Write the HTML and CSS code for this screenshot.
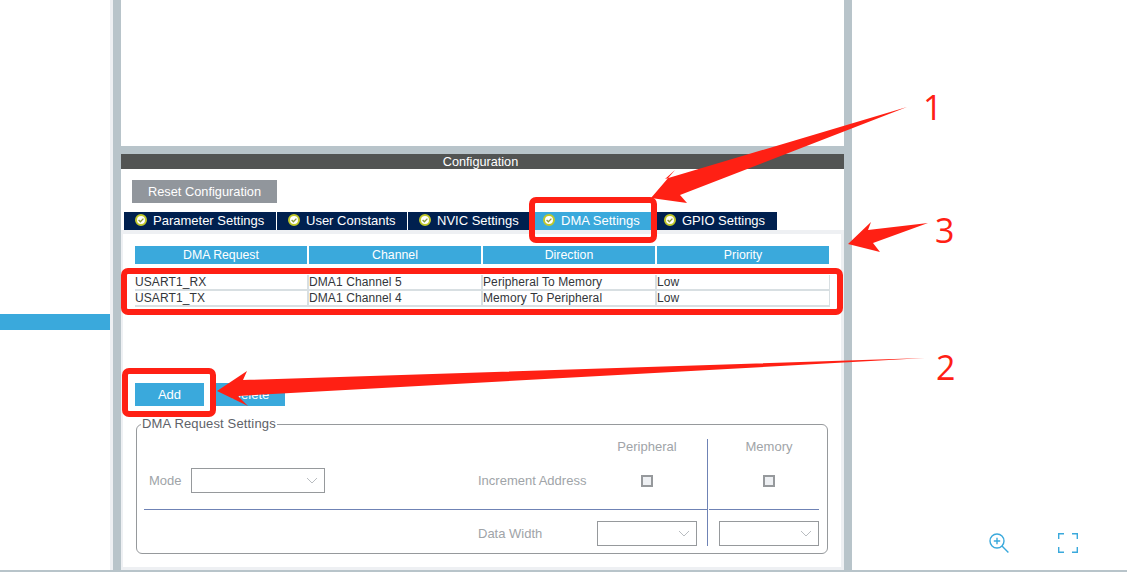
FILE: index.html
```html
<!DOCTYPE html>
<html lang="en">

<head>
    <meta charset="UTF-8">
    <title>DMA Settings</title>
    <link rel="stylesheet" href="styles.css">
</head>

<body>
    <div class="page">
        <div class="left-pane">
            <div class="left-item"></div>
        </div>

        <div class="main-pane">
            <div class="top-area"></div>

            <div class="config">
                <div class="config-title">Configuration</div>
                <button class="reset-btn">Reset Configuration</button>

                <div class="tabs">
                    <div class="tab"><svg class="tab-icon" viewBox="0 0 12 12"><circle cx="6" cy="6" r="5" fill="#fff" stroke="#c0c82a" stroke-width="2"/><path d="M3.6 6l1.8 1.8 3-3.2" fill="none" stroke="#8c9a3c" stroke-width="1.3"/></svg>Parameter Settings</div>
                    <div class="tab tab-user"><svg class="tab-icon" viewBox="0 0 12 12"><circle cx="6" cy="6" r="5" fill="#fff" stroke="#c0c82a" stroke-width="2"/><path d="M3.6 6l1.8 1.8 3-3.2" fill="none" stroke="#8c9a3c" stroke-width="1.3"/></svg>User Constants</div>
                    <div class="tab tab-nvic"><svg class="tab-icon" viewBox="0 0 12 12"><circle cx="6" cy="6" r="5" fill="#fff" stroke="#c0c82a" stroke-width="2"/><path d="M3.6 6l1.8 1.8 3-3.2" fill="none" stroke="#8c9a3c" stroke-width="1.3"/></svg>NVIC Settings</div>
                    <div class="tab tab-dma active"><svg class="tab-icon" viewBox="0 0 12 12"><circle cx="6" cy="6" r="5" fill="#fff" stroke="#c0c82a" stroke-width="2"/><path d="M3.6 6l1.8 1.8 3-3.2" fill="none" stroke="#8c9a3c" stroke-width="1.3"/></svg>DMA Settings</div>
                    <div class="tab tab-gpio"><svg class="tab-icon" viewBox="0 0 12 12"><circle cx="6" cy="6" r="5" fill="#fff" stroke="#c0c82a" stroke-width="2"/><path d="M3.6 6l1.8 1.8 3-3.2" fill="none" stroke="#8c9a3c" stroke-width="1.3"/></svg>GPIO Settings</div>
                </div>

                <div class="panel">
                    <div class="dma-head">
                        <div>DMA Request</div>
                        <div>Channel</div>
                        <div>Direction</div>
                        <div>Priority</div>
                    </div>

                    <div class="dma-rows">
                        <div class="dma-row">
                            <div>USART1_RX</div>
                            <div>DMA1 Channel 5</div>
                            <div>Peripheral To Memory</div>
                            <div>Low</div>
                        </div>
                        <div class="dma-row">
                            <div>USART1_TX</div>
                            <div>DMA1 Channel 4</div>
                            <div>Memory To Peripheral</div>
                            <div>Low</div>
                        </div>
                    </div>

                    <div class="actions">
                        <button class="action-btn">Add</button>
                        <button class="action-btn">Delete</button>
                    </div>

                    <fieldset class="request-box">
                        <legend>DMA Request Settings</legend>
                        <div class="request-grid">
                            <div class="col-title col-periph">Peripheral</div>
                            <div class="col-title col-mem">Memory</div>

                            <div class="mode-cell">
                                <span class="mode-label">Mode</span>
                                <div class="drop drop-mode"><svg viewBox="0 0 12 7"><path d="M1 1l5 5 5-5" fill="none" stroke="#b9bdc1"/></svg></div>
                            </div>
                            <div class="field-label row-inc">Increment Address</div>
                            <div class="check-cell col-periph row-inc"><span class="check"></span></div>
                            <div class="check-cell col-mem row-inc"><span class="check"></span></div>

                            <div class="h-line"></div>
                            <div class="v-line"></div>

                            <div class="field-label row-width">Data Width</div>
                            <div class="drop col-periph row-width"><svg viewBox="0 0 12 7"><path d="M1 1l5 5 5-5" fill="none" stroke="#b9bdc1"/></svg></div>
                            <div class="drop col-mem row-width"><svg viewBox="0 0 12 7"><path d="M1 1l5 5 5-5" fill="none" stroke="#b9bdc1"/></svg></div>
                        </div>
                    </fieldset>
                </div>
            </div>
        </div>

        <div class="right-pane">
            <div class="view-tools">
                <svg class="view-icon" viewBox="0 0 20 20" fill="none" stroke="#3aa9dc" stroke-width="1.4">
                    <circle cx="8" cy="8" r="7"/>
                    <path d="M13 13l6.4 6.4M8 4.8v6.4M4.8 8h6.4"/>
                </svg>
                <svg class="view-icon" viewBox="0 0 20 20" fill="none" stroke="#3aa9dc" stroke-width="1.4">
                    <path d="M.7 6V.7H6M14 .7h5.3V6M19.3 14v5.3H14M6 19.3H.7V14"/>
                </svg>
            </div>
        </div>
    </div>

    <!-- red markup drawn on top of the screenshot -->
    <svg class="markup" viewBox="0 0 1127 572">
        <g fill="none" stroke="#ff2014" stroke-width="6">
            <rect x="532" y="200" width="122" height="40" rx="4"/>
            <rect x="124" y="271" width="716" height="41" rx="4"/>
            <rect x="125" y="371" width="88" height="43" rx="4"/>
        </g>
        <g fill="#ff2014">
            <polygon points="907,107 665,179 675,170 651,198 687,203 680,195"/>
            <polygon points="925,358 243,380 247,371 217,391 248,406 238,396"/>
            <polygon points="928,223 868,230 871,222 848,244 880,252 873,243"/>
        </g>
        <g class="markup-num">
            <text x="923" y="120">1</text>
            <text x="936" y="380">2</text>
            <text x="935" y="243">3</text>
        </g>
    </svg>
</body>

</html>
```

FILE: styles.css
```css
html,
body {
    margin: 0;
    height: 100%;
    overflow: hidden;
    background: #fff;
}

body {
    position: relative;
    font-family: "Liberation Sans", Arial, sans-serif;
    font-size: 12px;
}

.page {
    display: flex;
    height: 570px;
    border-bottom: 2px solid #b8c4ca;
}

.left-pane {
    width: 110px;
    border-right: 3px solid #eef0f3;
    padding-top: 314px;
}

.left-item {
    height: 16px;
    background: #3aa9dc;
}

.main-pane {
    width: 723px;
    border-left: 8px solid #b8c4ca;
    border-right: 8px solid #b8c4ca;
    display: flex;
    flex-direction: column;
}

.top-area {
    height: 146px;
    border-bottom: 8px solid #b8c4ca;
}

.config {
    flex: 1;
    display: flex;
    flex-direction: column;
    align-items: flex-start;
}

.config-title {
    align-self: stretch;
    height: 15px;
    line-height: 16px;
    padding-right: 4px;
    background: #525453;
    color: #fff;
    text-align: center;
    font-size: 12.7px;
}

.reset-btn {
    width: 145px;
    height: 23px;
    margin: 11px 0 0 11px;
    padding: 0;
    border: 0;
    background: #91969c;
    color: #fff;
    font: 12.8px "Liberation Sans", Arial, sans-serif;
}

.tabs {
    display: flex;
    gap: 1px;
    margin: 9px 0 0 3px;
}

.tab {
    display: flex;
    align-items: center;
    width: 152px;
    height: 18px;
    box-sizing: border-box;
    padding: 0 0 2px 11px;
    background: #00204f;
    color: #fff;
    font-size: 13px;
    white-space: nowrap;
}

.tab-user {
    width: 130px;
}

.tab-nvic {
    width: 123px;
}

.tab-dma {
    width: 120px;
}

.tab-gpio {
    width: 124px;
}

.tab.active {
    background: #3aa9dc;
}

.tab-icon {
    width: 12px;
    height: 12px;
    margin-right: 6px;
    flex: none;
}

.panel {
    flex: 1;
    align-self: stretch;
    border: solid #eef0f3;
    border-width: 4px 3px 3px 2px;
    padding: 12px 0 0 12px;
}

.dma-head,
.dma-row {
    display: grid;
    grid-template-columns: repeat(4, 172px);
    column-gap: 2px;
}

.dma-head div {
    height: 18px;
    line-height: 18px;
    background: #3aa9dc;
    color: #fff;
    font-size: 12.3px;
    text-align: center;
}

.dma-rows {
    margin-top: 11px;
    width: 694px;
    border-right: 1px solid #d8dfe2;
}

.dma-row {
    height: 16px;
    line-height: 15px;
    box-sizing: border-box;
    border-bottom: 2px solid #d8dfe2;
    color: #33363a;
    letter-spacing: 0.1px;
}

.dma-row div + div {
    box-shadow: -2px 0 0 #d8dfe2;
}

.actions {
    display: flex;
    gap: 12px;
    margin-top: 76px;
}

.action-btn {
    width: 69px;
    height: 23px;
    padding: 0;
    border: 0;
    background: #3aa9dc;
    color: #fff;
    font: 13px "Liberation Sans", Arial, sans-serif;
}

.request-box {
    width: 692px;
    height: 138px;
    box-sizing: border-box;
    margin: 10px 0 0 1px;
    padding: 0 0 0 7px;
    border: 1px solid #96999c;
    border-radius: 6px;
}

.request-box legend {
    padding: 0 1px;
    margin-left: -3px;
    color: #5e6268;
    font-size: 13px;
    line-height: 16px;
    letter-spacing: 0.15px;
}

.request-grid {
    position: relative;
    display: grid;
    grid-template-columns: 334px 119px 100px 22px 100px;
    grid-template-rows: 29px 25px 16px 1px 11px 25px;
    margin-top: 7px;
    color: #a0a4a8;
    font-size: 13px;
}

.col-title {
    grid-row: 1;
    text-align: center;
    line-height: 16px;
}

.col-periph {
    grid-column: 3;
}

.col-mem {
    grid-column: 5;
}

.row-inc {
    grid-row: 2;
}

.row-width {
    grid-row: 6;
}

.mode-cell {
    grid-column: 1;
    grid-row: 2;
    display: flex;
    align-items: center;
    padding-left: 5px;
}

.mode-label {
    width: 42px;
}

.drop {
    display: flex;
    align-items: center;
    justify-content: flex-end;
    box-sizing: border-box;
    height: 25px;
    padding-right: 6px;
    border: 1px solid #96999c;
}

.drop svg {
    width: 12px;
    height: 7px;
}

.drop-mode {
    width: 134px;
}

.field-label {
    grid-column: 2;
    line-height: 25px;
}

.check-cell {
    display: flex;
    align-items: center;
    justify-content: center;
}

.check {
    width: 12px;
    height: 12px;
    box-sizing: border-box;
    border: 2px solid #96999c;
    background: #eef0f3;
}

.h-line {
    grid-column: 1 / -1;
    grid-row: 4;
    background: #6f83b5;
}

.v-line {
    grid-column: 4;
    grid-row: 1 / -1;
    width: 1px;
    margin-left: 10px;
    background: #6f83b5;
    box-shadow: 1px 0 0 #fff;
}

.right-pane {
    flex: 1;
    display: flex;
    align-items: flex-end;
}

.view-tools {
    display: flex;
    gap: 49px;
    padding: 0 0 17px 137px;
}

.view-icon {
    width: 20px;
    height: 20px;
}

.markup {
    position: absolute;
    top: 0;
    left: 0;
    width: 1127px;
    height: 572px;
}

.markup-num {
    fill: #ff2014;
    font-family: "Open Sans", sans-serif;
    font-size: 34px;
}
```
